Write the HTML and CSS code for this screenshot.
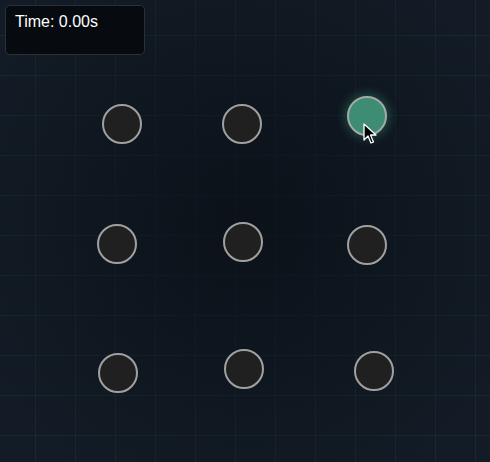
FILE: index.html
```html
<!DOCTYPE html>
<html>
<head>
<meta charset="utf-8">
<link rel="stylesheet" href="styles.css">
</head>
<body>
<div class="board">
  <div class="timer">Time: 0.00s</div>
  <div class="dot" style="left:102px;top:104px"></div>
  <div class="dot" style="left:222px;top:104px"></div>
  <div class="dot active" style="left:347px;top:96px"></div>
  <div class="dot" style="left:97px;top:224px"></div>
  <div class="dot" style="left:223px;top:222px"></div>
  <div class="dot" style="left:347px;top:225px"></div>
  <div class="dot" style="left:98px;top:353px"></div>
  <div class="dot" style="left:224px;top:349px"></div>
  <div class="dot" style="left:354px;top:351px"></div>
  <svg class="cursor" width="14" height="22" viewBox="0 0 14 22">
    <path d="M1 1 L1 17 L5 13 L8 20 L10.5 19 L7.5 12 L13 12 Z" fill="#000" stroke="#fff" stroke-width="1.3" stroke-linejoin="round"/>
  </svg>
</div>
</body>
</html>
```
FILE: styles.css
```css
html, body {
  margin: 0;
  padding: 0;
  width: 490px;
  height: 462px;
  overflow: hidden;
  font-family: "Liberation Sans", Arial, sans-serif;
}
.board {
  position: relative;
  width: 490px;
  height: 462px;
  background-color: #131c26;
  background-image:
    radial-gradient(circle at 245px 225px, rgba(8, 14, 21, 0.75) 0px, rgba(8, 14, 21, 0.4) 160px, rgba(8, 14, 21, 0) 300px),
    linear-gradient(to right, rgba(60, 80, 95, 0.2) 1px, transparent 1px),
    linear-gradient(to bottom, rgba(60, 80, 95, 0.2) 1px, transparent 1px);
  background-size: 100% 100%, 40px 40px, 40px 40px;
  background-position: 0 0, 35px 35px, 35px 35px;
}
.timer {
  position: absolute;
  left: 5px;
  top: 5px;
  width: 140px;
  height: 50px;
  box-sizing: border-box;
  padding: 7px 9px;
  background: #070b10;
  border: 1px solid #2a3038;
  border-radius: 5px;
  color: #ffffff;
  font-size: 16px;
  line-height: 18px;
}
.dot {
  position: absolute;
  width: 40px;
  height: 40px;
  box-sizing: border-box;
  border-radius: 50%;
  background: #202020;
  border: 2px solid #a0a0a0;
}
.dot.active {
  background: #3e8c74;
  border-color: #a3aaa7;
  box-shadow: 0 0 10px 3px rgba(62, 160, 130, 0.35);
}
.cursor {
  position: absolute;
  left: 363px;
  top: 123px;
}
```
